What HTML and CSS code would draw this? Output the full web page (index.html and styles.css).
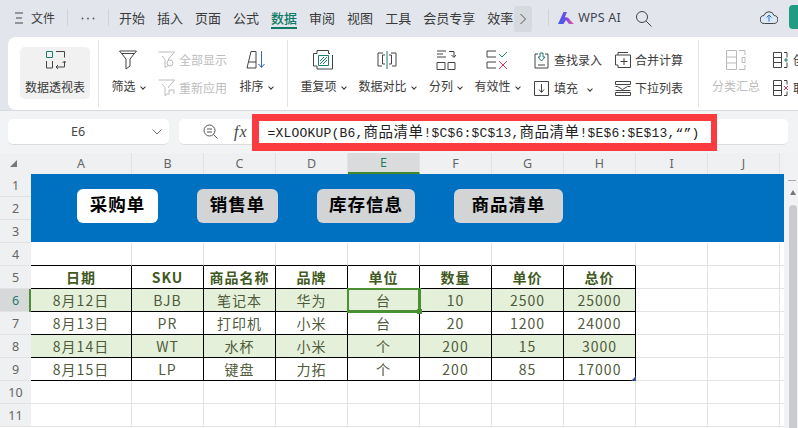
FILE: index.html
```html
<!DOCTYPE html>
<html lang="zh-CN">
<head>
<meta charset="utf-8">
<title>WPS 表格</title>
<link rel="stylesheet" href="styles.css">
</head>
<body>
<div class="app">
  <header class="topbar">
    <svg class="ic-menu" width="8" height="12" viewBox="0 0 8 12"><path d="M0 1h8M1 6h6M0 11h8" stroke="#444" fill="none"/></svg>
    <span class="file">文件</span>
    <i class="vsep s1"></i>
    <svg class="ic-more" width="14" height="3" viewBox="0 0 14 3"><circle cx="1.500" cy="1.500" r=".9" fill="#555"/><circle cx="7" cy="1.500" r=".9" fill="#555"/><circle cx="12.500" cy="1.500" r=".9" fill="#555"/></svg>
    <i class="vsep s2"></i>
    <nav class="tabs">
      <span>开始</span><span>插入</span><span>页面</span><span>公式</span><span class="on">数据</span><span>审阅</span><span>视图</span><span>工具</span><span>会员专享</span><span>效率</span>
    </nav>
    <span class="chev"><svg width="8" height="12" viewBox="0 0 8 12"><path d="M1.500 1l5 5-5 5" stroke="#555" fill="none"/></svg></span>
    <i class="vsep s3"></i>
    <svg class="ic-wps" width="16" height="12" viewBox="0 0 16 12"><defs><linearGradient id="wpsg" x1="0" x2="1" y1="0" y2="0"><stop offset="0" stop-color="#2f62ee"/><stop offset=".5" stop-color="#7a49e6"/><stop offset="1" stop-color="#f4589a"/></linearGradient></defs><path d="M0 12L5.500 0H9L6.800 5.500C9 5 11 6 12 8l4 4h-5L8 8 5.500 12z" fill="url(#wpsg)"/></svg>
    <span class="wpsai">WPS AI</span>
    <svg class="ic-search" width="17" height="17" viewBox="0 0 17 17"><circle cx="7" cy="7" r="5.500" stroke="#444" fill="none"/><path d="M11 11l5.500 5.500" stroke="#444" fill="none"/></svg>
    <span class="spacer"></span>
    <svg class="ic-cloud" width="18" height="14" viewBox="0 0 18 14"><path d="M5 13.500H4.500a4 4 0 0 1-.5-8 5.200 5.200 0 0 1 10 0 4 4 0 0 1-.5 8z" stroke="#444" fill="#dbe6f7"/><path d="M9 11.500V5M6.500 7.500L9 5l2.500 2.500" stroke="#2f6fd0" fill="none"/></svg>
    <span class="userbtn"></span>
  </header>

  <section class="ribbon">
    <div class="big pivot">
      <svg width="22" height="20" viewBox="0 0 22 20"><path d="M2.500 1.500h6v6h-6z" stroke="#1c7d6e" fill="none"/><path d="M12 1.500h8.500v6M2.500 11v7h6v-7M20.500 11.500v5.500H12M18.500 13l2-2 2 2M14 15l-2 2 2 2" stroke="#444" fill="none"/></svg>
      <span>数据透视表</span>
    </div>
    <i class="rsep"></i>
    <div class="big w-filter">
      <svg width="18" height="20" viewBox="0 0 18 20"><path d="M.5 1h17l-6.500 8v7l-4 3V9z" stroke="#444" fill="none"/><path d="M3 3.500h12" stroke="#444"/></svg>
      <span class="lbl">筛选<b class="caret"></b></span>
    </div>
    <div class="stack w-show dim">
      <div class="line"><svg width="18" height="18" viewBox="0 0 18 18"><path d="M.5 1h16l-6 7v1M4 5l3 3.500v8l3-2" stroke="#bbb" fill="none"/><circle cx="12" cy="12" r="3" stroke="#bbb" fill="none"/></svg><span>全部显示</span></div>
      <div class="line"><svg width="18" height="18" viewBox="0 0 18 18"><path d="M.5 1h16l-6 7v1M4 5l3 3.500v8l3-2" stroke="#bbb" fill="none"/><path d="M11 16v-5h5v4" stroke="#bbb" fill="none"/></svg><span>重新应用</span></div>
    </div>
    <div class="big w-sort">
      <svg width="20" height="20" viewBox="0 0 20 20"><path d="M1 18L5 1.500h5V18zM2.500 12H10" stroke="#444" fill="none"/><path d="M15.500 1v16M12.500 14l3 3.500 3-3.500" stroke="#3a62c8" fill="none"/></svg>
      <span class="lbl">排序<b class="caret"></b></span>
    </div>
    <i class="rsep s2"></i>
    <div class="big w-dup">
      <svg width="20" height="20" viewBox="0 0 20 20"><path d="M4 .5h11.500v3h4v15.500H4v-3H.5V3.500H4z" stroke="#444" fill="none" stroke-dasharray="16 4 60"/><path d="M5.500 5.500h10v10h-10zM7 14l7-7M7 11l4-4M10 14l4-4" stroke="#1c7d6e" fill="none"/></svg>
      <span class="lbl">重复项<b class="caret"></b></span>
    </div>
    <div class="big w-cmp">
      <svg width="20" height="20" viewBox="0 0 20 20"><path d="M6 3H1v13h4M14 3h5v13h-4M8 5H5.500v9H8M12 5h2.500v9H12" stroke="#444" fill="none"/><path d="M10 1v18" stroke="#1c7d6e"/></svg>
      <span class="lbl">数据对比<b class="caret"></b></span>
    </div>
    <div class="big w-split">
      <svg width="20" height="20" viewBox="0 0 20 20"><path d="M1 1h9M1 4h6M1 7h9M13 1.500h5V7M15.500 5l2.500 2.500L20 5M1 12.500h8v7H1zM12 12.500h7v7h-7z" stroke="#444" fill="none"/></svg>
      <span class="lbl">分列<b class="caret"></b></span>
    </div>
    <div class="big w-valid">
      <svg width="22" height="20" viewBox="0 0 22 20"><path d="M10 1H1v6h9M10 12H1v6h9" stroke="#444" fill="none"/><path d="M13 4l3 3 5-5" stroke="#1c9070" fill="none"/><path d="M13 11l8 8M21 11l-8 8" stroke="#d5345a" fill="none"/></svg>
      <span class="lbl">有效性<b class="caret"></b></span>
    </div>
    <div class="stack w-find">
      <div class="line"><svg width="15" height="17" viewBox="0 0 15 17"><path d="M1 2h3M11 2h3v14H1V2M4 13h7" stroke="#444" fill="none"/><path d="M6 1h3v4h2l-3.500 4L4 5h2z" stroke="#1c7d6e" fill="none"/></svg><span>查找录入</span></div>
      <div class="line"><svg width="15" height="15" viewBox="0 0 15 15"><path d="M5 .5H.5v14h14V.5H10M7.500 3v8M5 8.500l2.500 3 2.500-3M3 .5h9" stroke="#444" fill="none"/></svg><span>填充<b class="caret wide"></b></span></div>
    </div>
    <div class="stack w-merge">
      <div class="line"><svg width="16" height="16" viewBox="0 0 16 16"><path d="M3 3V.5h10M3 3H.5v10h2.500v2.500h12.500V3zM9 6v7M5.500 9.500h7" stroke="#444" fill="none"/></svg><span>合并计算</span></div>
      <div class="line"><svg width="16" height="15" viewBox="0 0 16 15"><path d="M.5.500h15v3H.5zM.5 5.500h2l5 3 5-3h3M.5 9.500h15M.5 11.500h15v3H.5z" stroke="#444" fill="none"/></svg><span>下拉列表</span></div>
    </div>
    <i class="rsep s3"></i>
    <div class="big w-sub dim">
      <svg width="20" height="20" viewBox="0 0 20 20"><path d="M.5.500h10v19H.5zM.5 7h10M.5 13h10M13 .5h6V5M13 19.500h6V15M16 7.500h3v5h-3z" stroke="#bbb" fill="none"/></svg>
      <span class="lbl">分类汇总</span>
    </div>
    <div class="stack w-group">
      <div class="line"><svg width="15" height="17" viewBox="0 0 15 17"><path d="M.5.500h8v15h-8zM.5 5.500h8M.5 10.500h8M11 .5h3v5M11 15.500h3v-5" stroke="#444" fill="none"/><path d="M11 8h4M13 6v4" stroke="#1c7d6e" fill="none"/></svg><span>创建组</span></div>
      <div class="line"><svg width="15" height="17" viewBox="0 0 15 17"><path d="M.5.500h8v15h-8zM.5 5.500h8M.5 10.500h8M11 .5h3v4M11 15.500h3v-4" stroke="#444" fill="none"/><path d="M11 6l4 4M15 6l-4 4" stroke="#d5345a" fill="none"/></svg><span>取消组合</span></div>
    </div>
  </section>

  <section class="fbar">
    <div class="namebox"><span>E6</span><svg width="10" height="6" viewBox="0 0 10 6"><path d="M.5.500L5 5l4.500-4.500" stroke="#777" fill="none"/></svg></div>
    <div class="formula">
      <svg class="ic-zoom" width="15" height="15" viewBox="0 0 15 15"><circle cx="6.500" cy="6.500" r="5.500" stroke="#555" fill="none"/><path d="M4 5h5M4 8h5M10.500 10.500l4 4" stroke="#555" fill="none"/></svg>
      <span class="fx">fx</span>
      <i class="redbox"></i>
      <span class="ftext">=XLOOKUP(B6,<b class="zh">商品清单</b>!$C$6:$C$13,<b class="zh">商品清单</b>!$E$6:$E$13,“”)</span>
    </div>
  </section>

  <section class="sheet">
    <div class="grid">
      <div class="ch corner"><svg width="7" height="7" viewBox="0 0 7 7"><path d="M7 0v7H0z" fill="#777"/></svg></div>
      <div class="ch">A</div><div class="ch">B</div><div class="ch">C</div><div class="ch">D</div><div class="ch sel">E</div><div class="ch">F</div><div class="ch">G</div><div class="ch">H</div><div class="ch">I</div><div class="ch">J</div><div class="ch"></div>

      <div class="rh">1</div>
      <div class="banner">
        <span class="sbtn on w1">采购单</span>
        <span class="sbtn w1">销售单</span>
        <span class="sbtn w2">库存信息</span>
        <span class="sbtn w3">商品清单</span>
      </div>
      <div class="rh">2</div>
      <div class="rh">3</div>

      <div class="rh">4</div>
      <div class="c bb"></div><div class="c bb"></div><div class="c bb"></div><div class="c bb"></div><div class="c bb"></div><div class="c bb"></div><div class="c bb"></div><div class="c bb"></div><div class="c"></div><div class="c"></div><div class="c"></div>

      <div class="rh">5</div>
      <div class="c t h">日期</div><div class="c t h">SKU</div><div class="c t h">商品名称</div><div class="c t h">品牌</div><div class="c t h">单位</div><div class="c t h">数量</div><div class="c t h">单价</div><div class="c t h">总价</div><div class="c"></div><div class="c"></div><div class="c"></div>

      <div class="rh selr">6</div>
      <div class="c t g first">8月12日</div><div class="c t g">BJB</div><div class="c t g">笔记本</div><div class="c t g">华为</div><div class="c t g cur">台<i class="handle"></i></div><div class="c t g">10</div><div class="c t g">2500</div><div class="c t g">25000</div><div class="c"></div><div class="c"></div><div class="c"></div>

      <div class="rh">7</div>
      <div class="c t">8月13日</div><div class="c t">PR</div><div class="c t">打印机</div><div class="c t">小米</div><div class="c t">台</div><div class="c t">20</div><div class="c t">1200</div><div class="c t">24000</div><div class="c"></div><div class="c"></div><div class="c"></div>

      <div class="rh">8</div>
      <div class="c t g">8月14日</div><div class="c t g">WT</div><div class="c t g">水杯</div><div class="c t g">小米</div><div class="c t g">个</div><div class="c t g">200</div><div class="c t g">15</div><div class="c t g">3000</div><div class="c"></div><div class="c"></div><div class="c"></div>

      <div class="rh">9</div>
      <div class="c t">8月15日</div><div class="c t">LP</div><div class="c t">键盘</div><div class="c t">力拓</div><div class="c t">个</div><div class="c t">200</div><div class="c t">85</div><div class="c t">17000<i class="corner-mark"></i></div><div class="c"></div><div class="c"></div><div class="c"></div>

      <div class="rh">10</div>
      <div class="c"></div><div class="c"></div><div class="c"></div><div class="c"></div><div class="c"></div><div class="c"></div><div class="c"></div><div class="c"></div><div class="c"></div><div class="c"></div><div class="c"></div>

      <div class="rh">11</div>
      <div class="c"></div><div class="c"></div><div class="c"></div><div class="c"></div><div class="c"></div><div class="c"></div><div class="c"></div><div class="c"></div><div class="c"></div><div class="c"></div><div class="c"></div>
    </div>
    <aside class="vscroll">
      <i class="dash"></i>
      <i class="up"></i>
      <i class="thumb"></i>
    </aside>
  </section>
</div>
</body>
</html>
```
FILE: styles.css
```css
* { box-sizing: border-box; }
html, body { margin: 0; padding: 0; }
body {
  width: 798px; height: 428px; overflow: hidden;
  font-family: "Noto Sans CJK SC", "Noto Sans", sans-serif;
  color: #3a3a3a; background: #e2e6ec;
}
i, b { font-style: normal; font-weight: normal; }
.app { display: flex; flex-direction: column; height: 428px; }

/* top bar */
.topbar { height: 37px; flex: none; display: flex; align-items: center; padding-left: 15px; font-size: 13px; line-height: 18px; }
.file { font-size: 12px; margin-left: 8px; margin-top: -2px; }
.ic-menu { margin-top: -2px; }
.vsep { width: 1px; height: 17px; background: #cfd3d8; flex: none; margin-top: -2px; }
.vsep.s1 { margin-left: 12px; }
.ic-more { margin-left: 13px; margin-right: 13px; margin-top: -1px; }
.tabs { display: flex; gap: 12px; margin-left: 10px; height: 36px; margin-top: -1px; align-items: center; }
.tabs span { position: relative; }
.tabs .on { color: #0d7a63; font-weight: 500; }
.tabs .on::after { content: ""; position: absolute; left: 0; right: 0; bottom: -2px; height: 2px; background: #0d7a63; }
.chev { width: 18px; height: 26px; margin-left: 1px; background: #d6d9dd; border-radius: 3px; display: flex; align-items: center; justify-content: center; }
.vsep.s3 { margin-left: 16px; }
.ic-wps { margin-left: 9px; margin-top: -2px; }
.wpsai { font-family: "Noto Sans", sans-serif; font-size: 12.500px; margin-left: 4px; letter-spacing: .2px; color: #3f4450; margin-top: -2px; }
.ic-search { margin-left: 14px; margin-top: -1px; }
.spacer { flex: 1; }
.ic-cloud { margin-right: 11px; margin-top: -3px; }
.userbtn { width: 9px; height: 24px; background: #1f9c82; border-radius: 4px 0 0 4px; margin-top: -3px; }

/* ribbon */
.ribbon { height: 73px; flex: none; margin-left: 8px; background: #fff; border-radius: 8px 0 0 8px; display: flex; align-items: stretch; font-size: 12px; line-height: 16px; overflow: hidden; padding-left: 12px; }
.big { flex: none; display: flex; flex-direction: column; align-items: center; padding-top: 13px; white-space: nowrap; }
.big svg { display: block; height: 20px; }
.big > span { margin-top: 8px; }
.pivot { width: 70px; height: 52px; margin-top: 10px; padding-top: 3px; background: #f1f1f1; border-radius: 5px; }
.pivot > span { margin-top: 9px; }
.rsep { width: 1px; height: 67px; margin-top: 3px; margin-left: 8px; background: #e3e3e3; flex: none; }
.caret { display: inline-block; width: 4px; height: 4px; margin-left: 5px; position: relative; top: -2px; border: solid #333; border-width: 0 1px 1px 0; transform: rotate(45deg); }
.caret.wide { margin-left: 10px; }
.lbl { display: block; }
.w-filter { width: 38px; margin-left: 10px; }
.stack { flex: none; display: flex; flex-direction: column; gap: 8px; padding-top: 13px; white-space: nowrap; }
.line { display: flex; align-items: center; height: 20px; gap: 3px; }
.dim, .dim .lbl { color: #bdbdbd; }
.w-show { width: 70px; margin-left: 11px; }
.w-sort { width: 36px; margin-left: 10px; }
.rsep.s2 { margin-left: 13px; }
.w-dup { width: 46px; margin-left: 12px; }
.w-cmp { width: 58px; margin-left: 12px; }
.w-split { width: 35px; margin-left: 12px; }
.w-valid { width: 46px; margin-left: 11px; }
.w-find { width: 70px; margin-left: 14px; }
.w-find .line { gap: 5px; }
.w-merge .line { gap: 4px; }
.w-merge { width: 70px; margin-left: 11px; }
.rsep.s3 { margin-left: 13px; }
.w-sub { width: 48px; margin-left: 13px; }
.w-group { margin-left: 13px; }
.w-group .line { gap: 5px; }

/* formula bar */
.fbar { height: 43px; flex: none; background: #f2f3f4; border-top: 1px solid #d8dbde; display: flex; padding: 8px 10px 0 8px; gap: 10px; }
.namebox { width: 161px; height: 26px; background: #fff; border-radius: 5px; border-bottom: 1px solid #dcdcdc; display: flex; align-items: center; font-size: 12.500px; padding-left: 63px; font-family: "Noto Sans", sans-serif; color: #444; }
.namebox svg { margin-left: 67px; }
.formula { position: relative; flex: 1; height: 26px; background: #fff; border-radius: 5px; border-bottom: 1px solid #dcdcdc; display: flex; align-items: center; padding-left: 24px; }
.fx { font-family: "Liberation Serif", serif; font-style: italic; font-size: 16px; margin-left: 16px; color: #444; letter-spacing: 1px; }
.ftext { font-family: "Liberation Mono", monospace; font-size: 13px; letter-spacing: .2px; margin-left: 20px; margin-top: -2px; color: #222; white-space: nowrap; position: relative; }
.zh { font-family: "Noto Sans CJK SC", sans-serif; font-size: 14.500px; letter-spacing: .5px; }
.redbox { position: absolute; left: 73px; top: -5px; width: 465px; height: 37px; background: #fff; border: solid #fb3b3f; border-width: 7px 6px 8px 7px; }

/* sheet */
.sheet { flex: 1; min-height: 0; display: flex; background: #fff; overflow: hidden; }
.grid { width: 784px; flex: none; display: grid; grid-template-columns: 31px 101px repeat(8, 72px) 72px 5px; grid-template-rows: 21px repeat(12, 23px); font-size: 14px; }
.ch { background: #eff0f1; display: flex; align-items: center; justify-content: center; font-size: 12.500px; color: #666; border-right: 1px solid #e1e2e4; font-family: "Noto Sans", sans-serif; }
.ch.corner { border: 0; justify-content: flex-end; padding-right: 14px; }
.ch.sel { background: #dadbdc; border-bottom: 2px solid #3e8a2b; color: #1f7d5e; }
.rh { background: #eff0f1; display: flex; align-items: center; justify-content: center; font-size: 12.500px; color: #666; border-bottom: 1px solid #e1e2e4; font-family: "Noto Sans", sans-serif; }
.rh.selr { background: #d6d8da; color: #1f7d6e; }
.banner { grid-column: 2 / -1; grid-row: 2 / span 3; margin-bottom: 1px; background: #0070c0; display: flex; align-items: flex-start; gap: 39px; padding: 15px 0 0 46px; }
.sbtn { height: 34px; padding-bottom: 5px; border-radius: 6px; background: #d2d4d6; color: #000; font-size: 17.500px; font-weight: 700; letter-spacing: 1px; display: flex; align-items: center; justify-content: center; }
.sbtn.on { background: #fff; }
.w1 { width: 81px; }
.w2 { width: 98px; }
.w3 { width: 109px; }
.c { border-right: 1px solid #e1e3e6; border-bottom: 1px solid #e1e3e6; position: relative; display: flex; align-items: center; justify-content: center; }
.bb { border-bottom-color: #000; }
.t { border-right-color: #000; border-bottom-color: #000; color: #4f5b3c; letter-spacing: 1px; }
.h { font-weight: 700; color: #3f5a22; }
.g { background: #e4f0d9; }
.first { box-shadow: -2px 0 0 #4b8f35; }
.cur { z-index: 1; box-shadow: inset 0 0 0 1px #4b8f35, 0 0 0 1px #4b8f35; border-color: #4b8f35; }
.handle { position: absolute; right: -3px; bottom: -3px; width: 5px; height: 5px; background: #4b8f35; }
.corner-mark { position: absolute; right: -1px; bottom: -1px; width: 5px; height: 5px; background: #3d4a8f; clip-path: polygon(100% 0, 100% 100%, 0 100%); }

/* scrollbar */
.vscroll { flex: 1; position: relative; background: #f1f2f3; }
.dash { position: absolute; left: 4px; top: 27px; width: 8px; height: 1px; background: #aaa; }
.up { position: absolute; left: 6px; top: 37px; width: 0; height: 0; border: 3px solid transparent; border-top: 0; border-bottom: 5px solid #777; }
.thumb { position: absolute; left: 5px; right: 1px; top: 52px; bottom: 0; background: #c9cbce; border-radius: 4px 4px 0 0; }
```
